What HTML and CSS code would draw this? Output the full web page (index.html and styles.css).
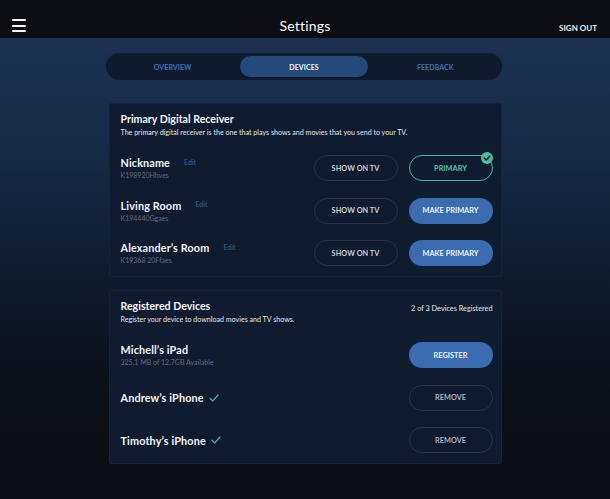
FILE: index.html
```html
<!DOCTYPE html>
<html lang="en">
<head>
<meta charset="utf-8">
<title>Settings</title>
<link rel="stylesheet" href="styles.css">
</head>
<body>
<header class="topbar">
  <div class="menu" aria-label="Menu"><span></span><span></span><span></span></div>
  <h1 class="title">Settings</h1>
  <a class="signout">SIGN OUT</a>
</header>
<main class="page">
  <nav class="tabs">
    <div class="tab">OVERVIEW</div>
    <div class="tab active">DEVICES</div>
    <div class="tab">FEEDBACK</div>
  </nav>

  <section class="card">
    <div class="card-head">
      <div>
        <h2 class="card-title">Primary Digital Receiver</h2>
        <p class="card-sub">The primary digital receiver is the one that plays shows and movies that you send to your TV.</p>
      </div>
    </div>
    <div class="row">
      <div class="info">
        <div class="name">Nickname <span class="edit">Edit</span></div>
        <div class="meta">K198920Hhves</div>
      </div>
      <div class="actions">
        <button class="btn outline">SHOW ON TV</button>
        <button class="btn primary-sel">PRIMARY
          <svg class="badge" viewBox="0 0 12 12" width="12" height="12"><circle cx="6" cy="6" r="6" fill="#4fbf9b"/><polyline points="3.3,6.2 5.2,8 8.7,4.3" fill="none" stroke="#0f1b2f" stroke-width="1.6" stroke-linecap="round" stroke-linejoin="round"/></svg>
        </button>
      </div>
    </div>
    <div class="row">
      <div class="info">
        <div class="name">Living Room <span class="edit">Edit</span></div>
        <div class="meta">K194440Ggaes</div>
      </div>
      <div class="actions">
        <button class="btn outline">SHOW ON TV</button>
        <button class="btn solid">MAKE PRIMARY</button>
      </div>
    </div>
    <div class="row">
      <div class="info">
        <div class="name">Alexander’s Room <span class="edit">Edit</span></div>
        <div class="meta">K19368 20Ffaes</div>
      </div>
      <div class="actions">
        <button class="btn outline">SHOW ON TV</button>
        <button class="btn solid">MAKE PRIMARY</button>
      </div>
    </div>
  </section>

  <section class="card">
    <div class="card-head">
      <div>
        <h2 class="card-title">Registered Devices</h2>
        <p class="card-sub">Register your device to download movies and TV shows.</p>
      </div>
      <div class="count">2 of 3 Devices Registered</div>
    </div>
    <div class="row">
      <div class="info">
        <div class="name">Michell’s iPad</div>
        <div class="meta">325.1 MB of 12.7GB Available</div>
      </div>
      <div class="actions">
        <button class="btn solid">REGISTER</button>
      </div>
    </div>
    <div class="row">
      <div class="info">
        <div class="name">Andrew’s iPhone <svg class="tick" viewBox="0 0 10 8" width="10" height="8"><polyline points="1,4.2 3.8,7 9,1" fill="none" stroke="#46a98a" stroke-width="1.3" stroke-linecap="round" stroke-linejoin="round"/></svg></div>
      </div>
      <div class="actions">
        <button class="btn outline dim">REMOVE</button>
      </div>
    </div>
    <div class="row">
      <div class="info">
        <div class="name">Timothy’s iPhone <svg class="tick" viewBox="0 0 10 8" width="10" height="8"><polyline points="1,4.2 3.8,7 9,1" fill="none" stroke="#46a98a" stroke-width="1.3" stroke-linecap="round" stroke-linejoin="round"/></svg></div>
      </div>
      <div class="actions">
        <button class="btn outline dim">REMOVE</button>
      </div>
    </div>
  </section>
</main>
</body>
</html>
```

FILE: styles.css
```css
* { box-sizing: border-box; }
html, body { margin: 0; height: 100%; }
body {
  font-family: Lato, "Open Sans", "Liberation Sans", sans-serif;
  color: #fff;
  background: #0b0f16;
  width: 610px;
  height: 499px;
  overflow: hidden;
}
.topbar {
  height: 38px;
  background: #0b0d12;
  display: flex;
  align-items: center;
  justify-content: space-between;
  padding: 13px 13px 0 12px;
  position: relative;
}
.menu { width: 14px; display: flex; flex-direction: column; gap: 3.5px; }
.menu span { display: block; height: 2px; background: #f2f4f7; border-radius: 1px; }
.title {
  margin: 0;
  font-size: 14px;
  font-weight: 400;
  letter-spacing: 0.2px;
  position: absolute;
  left: 0; right: 0; top: 17px;
  text-align: center;
  line-height: 18px;
  pointer-events: none;
}
.signout { font-size: 8px; font-weight: 700; color: #f1f3f6; margin-top: 5px; }

.page {
  height: 461px;
  background: linear-gradient(180deg, #1b3152 0%, #172a45 25%, #0f1a2a 55%, #0b0f16 80%, #0b0e14 100%);
  padding-top: 15px;
  display: flex;
  flex-direction: column;
  align-items: center;
}
.tabs {
  width: 396px;
  height: 27px;
  background: #0f1a2c;
  border-radius: 14px;
  display: grid;
  grid-template-columns: repeat(3, 1fr);
  gap: 4px;
  padding: 3px;
  margin-right: 2px;
}
.tab {
  display: flex; align-items: center; justify-content: center;
  font-size: 7px; font-weight: 700; color: #3b72bd;
  border-radius: 11px;
  letter-spacing: 0.1px;
}
.tab.active { background: #25497b; color: #f2f5f9; }

.card {
  width: 393px;
  height: 174px;
  background: #0f1b2f;
  border: 1px solid #15243a;
  border-radius: 2px;
  margin-top: 23px;
  padding: 9px 8px 0 11px;
}
.card + .card { margin-top: 13px; }
.card-head { display: flex; justify-content: space-between; align-items: flex-start; height: 34px; }
.card-title { margin: 0; font-size: 10.6px; font-weight: 700; line-height: 13px; color: #f3f5f8; }
.card-sub { margin: 2px 0 0; font-size: 7.1px; line-height: 9px; color: #e3e7ec; }
.count { font-size: 7.3px; color: #e3e7ec; margin-top: 4px; }

.row { height: 42.5px; display: flex; align-items: center; justify-content: space-between; }
.info { display: flex; flex-direction: column; }
.name { font-size: 10.8px; font-weight: 700; line-height: 13px; color: #f3f5f8; display: flex; align-items: center; letter-spacing: 0.15px; }
.edit { font-size: 7px; font-weight: 400; color: #33629f; margin-left: 14px; margin-top: -1px; letter-spacing: 0; }
.meta { font-size: 7px; color: #5f6d80; margin-top: 2px; line-height: 9px; }
.tick { margin-left: 5px; }

.actions { display: flex; gap: 11px; }
.btn {
  width: 84px; height: 26px;
  border-radius: 13px;
  font-family: inherit;
  font-size: 7.3px; font-weight: 700;
  display: flex; align-items: center; justify-content: center;
  padding: 0;
  position: relative;
  letter-spacing: 0.05px;
}
.btn.outline { background: transparent; border: 1px solid #24374f; color: #c9ced6; }
.btn.outline.dim { color: #a9b1bd; }
.btn.solid { background: #3a6cb1; border: none; color: #eef2f8; }
.btn.primary-sel { background: transparent; border: 1.5px solid #4bb596; color: #5ac4a0; }
.badge { position: absolute; right: -1px; top: -4px; }
```
